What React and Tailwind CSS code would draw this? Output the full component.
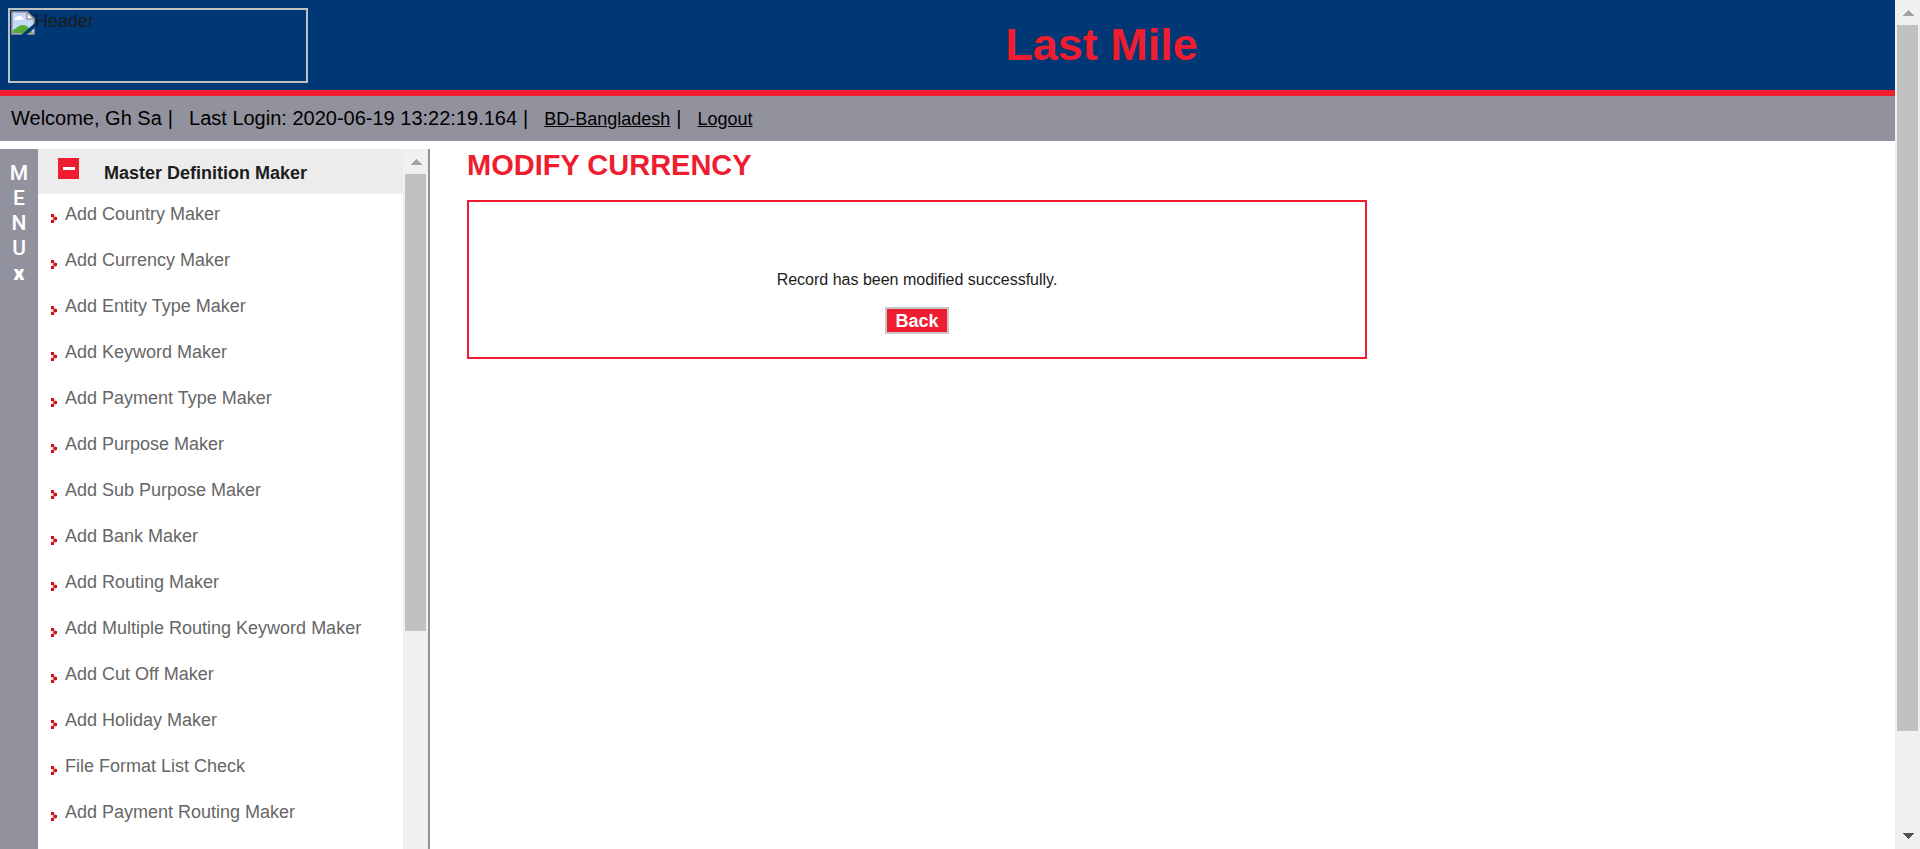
const items = [
  "Add Country Maker",
  "Add Currency Maker",
  "Add Entity Type Maker",
  "Add Keyword Maker",
  "Add Payment Type Maker",
  "Add Purpose Maker",
  "Add Sub Purpose Maker",
  "Add Bank Maker",
  "Add Routing Maker",
  "Add Multiple Routing Keyword Maker",
  "Add Cut Off Maker",
  "Add Holiday Maker",
  "File Format List Check",
  "Add Payment Routing Maker",
];

function Bullet() {
  return (
    <svg aria-hidden="true" className="mt-3 h-[9px] w-[6px] shrink-0" viewBox="0 0 6 9">
      <rect x="0" y="3" width="3" height="3" fill="#f3d0d0" />
      <rect x="3" y="1.500" width="2" height="6" fill="#eebcbc" />
      <rect x="0" y="0" width="3" height="3" fill="#c4161c" />
      <rect x="2.500" y="3" width="3.500" height="3" fill="#c4161c" />
      <rect x="0" y="6" width="3" height="3" fill="#c4161c" />
    </svg>
  );
}

function BrokenImage() {
  return (
    <svg aria-hidden="true" className="h-6 w-6 shrink-0" viewBox="0 0 24 24">
      <path d="M1 1h15l7 7v15H1z" fill="#c4d8f8" stroke="#9a9a9a" strokeWidth="1.500" />
      <path d="M4 9a2 2 0 0 1 2-3 3 3 0 0 1 5 0 2 2 0 0 1 1 3z" fill="#fff" />
      <path d="M2 22v-3c4-2 6-5 10-5 3 0 5 2 7 4l3 4z" fill="#57ab35" />
      <path d="M16 1v7h7z" fill="#fff" stroke="#9a9a9a" strokeWidth="1.500" />
      <path d="M24 12v4.500L15.500 24H10z" fill="#003876" />
    </svg>
  );
}

function Arrow({ down = false }) {
  return (
    <svg aria-hidden="true" className="h-[6px] w-[12px]" viewBox="0 0 12 6" shapeRendering="crispEdges">
      {down ? <path d="M0 0h12L6 6z" fill="#505050" /> : <path d="M0 6h12L6 0z" fill="#a3a3a3" />}
    </svg>
  );
}

function Separator() {
  return <span className="mr-4 ml-1.5">|</span>;
}

export default function App() {
  return (
    <div className="flex h-screen overflow-hidden bg-white font-['Liberation_Sans',Arial,sans-serif] text-[#1c1c1c]">
      <div className="flex min-w-0 flex-1 flex-col">
        <header className="flex h-24 shrink-0 border-b-[6px] border-[#ee1d2f] bg-[#003876]">
          <div className="p-2">
            <div role="img" aria-label="Header" className="flex h-[75px] w-[300px] border-2 border-[#c0c0c0] p-px text-lg leading-5">
              <BrokenImage />
              <span>Header</span>
            </div>
          </div>
          <h1 className="flex flex-1 items-center justify-center pr-2 text-[45px] font-bold text-[#ee1d2f]">Last Mile</h1>
        </header>

        <div className="flex h-[45px] shrink-0 items-baseline bg-[#92929e] pt-2 pl-[11px] text-xl text-black">
          <span>Welcome, Gh Sa</span>
          <Separator />
          <span>Last Login: 2020-06-19 13:22:19.164</span>
          <Separator />
          <a href="#country" className="text-lg underline">BD-Bangladesh</a>
          <Separator />
          <a href="#logout" className="text-lg underline">Logout</a>
        </div>

        <div className="flex min-h-0 flex-1 pt-2">
          <aside className="flex shrink-0 border-r-2 border-[#92929e]">
            <button
              type="button"
              aria-label="Close menu"
              className="flex w-[38px] flex-col items-center bg-[#92929e] pt-3 font-[Roboto,sans-serif] text-[21px] leading-[25px] font-medium text-white"
            >
              <span>M</span>
              <span>E</span>
              <span>N</span>
              <span>U</span>
              <span className="font-black">x</span>
            </button>
            <nav className="w-[365px] overflow-hidden">
              <button type="button" className="flex h-[45px] w-full items-start bg-[#ececec] pt-[9px] pl-5">
                <svg aria-hidden="true" className="h-[21px] w-[21px]" viewBox="0 0 21 21">
                  <rect width="21" height="21" fill="#ee1d2f" />
                  <rect x="5" y="9" width="12" height="3" fill="#fff" />
                </svg>
                <span className="pt-[3px] pl-[25px] text-lg leading-6 font-bold">Master Definition Maker</span>
              </button>
              <ul>
                {items.map((item) => (
                  <li key={item} className="h-[46px] pt-2 pl-[13px]">
                    <a href="#maker" className="flex items-start gap-2 text-lg leading-6 text-[#666]">
                      <Bullet />
                      {item}
                    </a>
                  </li>
                ))}
              </ul>
            </nav>
            <div className="flex w-[25px] flex-col items-center bg-[#f0f0f0]">
              <div className="flex h-[25px] shrink-0 items-center pt-px"><Arrow /></div>
              <div className="h-[457px] w-[21px] bg-[#c1c1c1]" />
            </div>
          </aside>

          <main className="min-w-0 flex-1 pl-[37px]">
            <h2 className="text-[29px] leading-8 font-bold text-[#ee1d2f]">MODIFY CURRENCY</h2>
            <section className="mt-[19px] flex w-[900px] max-w-full flex-col items-center border-2 border-[#ee1d2f] pt-[66px] pb-[23px]">
              <p className="text-base leading-6">Record has been modified successfully.</p>
              <button type="button" className="mt-[15px] h-[27px] border-2 border-[#c8c8c8] bg-[#ee1d2f] px-2 text-lg leading-5 font-bold text-white">
                Back
              </button>
            </section>
          </main>
        </div>
      </div>

      <div className="flex w-[25px] shrink-0 flex-col items-center bg-[#f0f0f0]">
        <div className="flex h-[25px] shrink-0 items-center pt-px"><Arrow /></div>
        <div className="flex min-h-0 w-[21px] flex-1 flex-col">
          <div className="h-[88%] bg-[#c1c1c1]" />
        </div>
        <div className="flex h-[22px] shrink-0 items-center justify-center pb-[4px]"><Arrow down /></div>
      </div>
    </div>
  );
}
